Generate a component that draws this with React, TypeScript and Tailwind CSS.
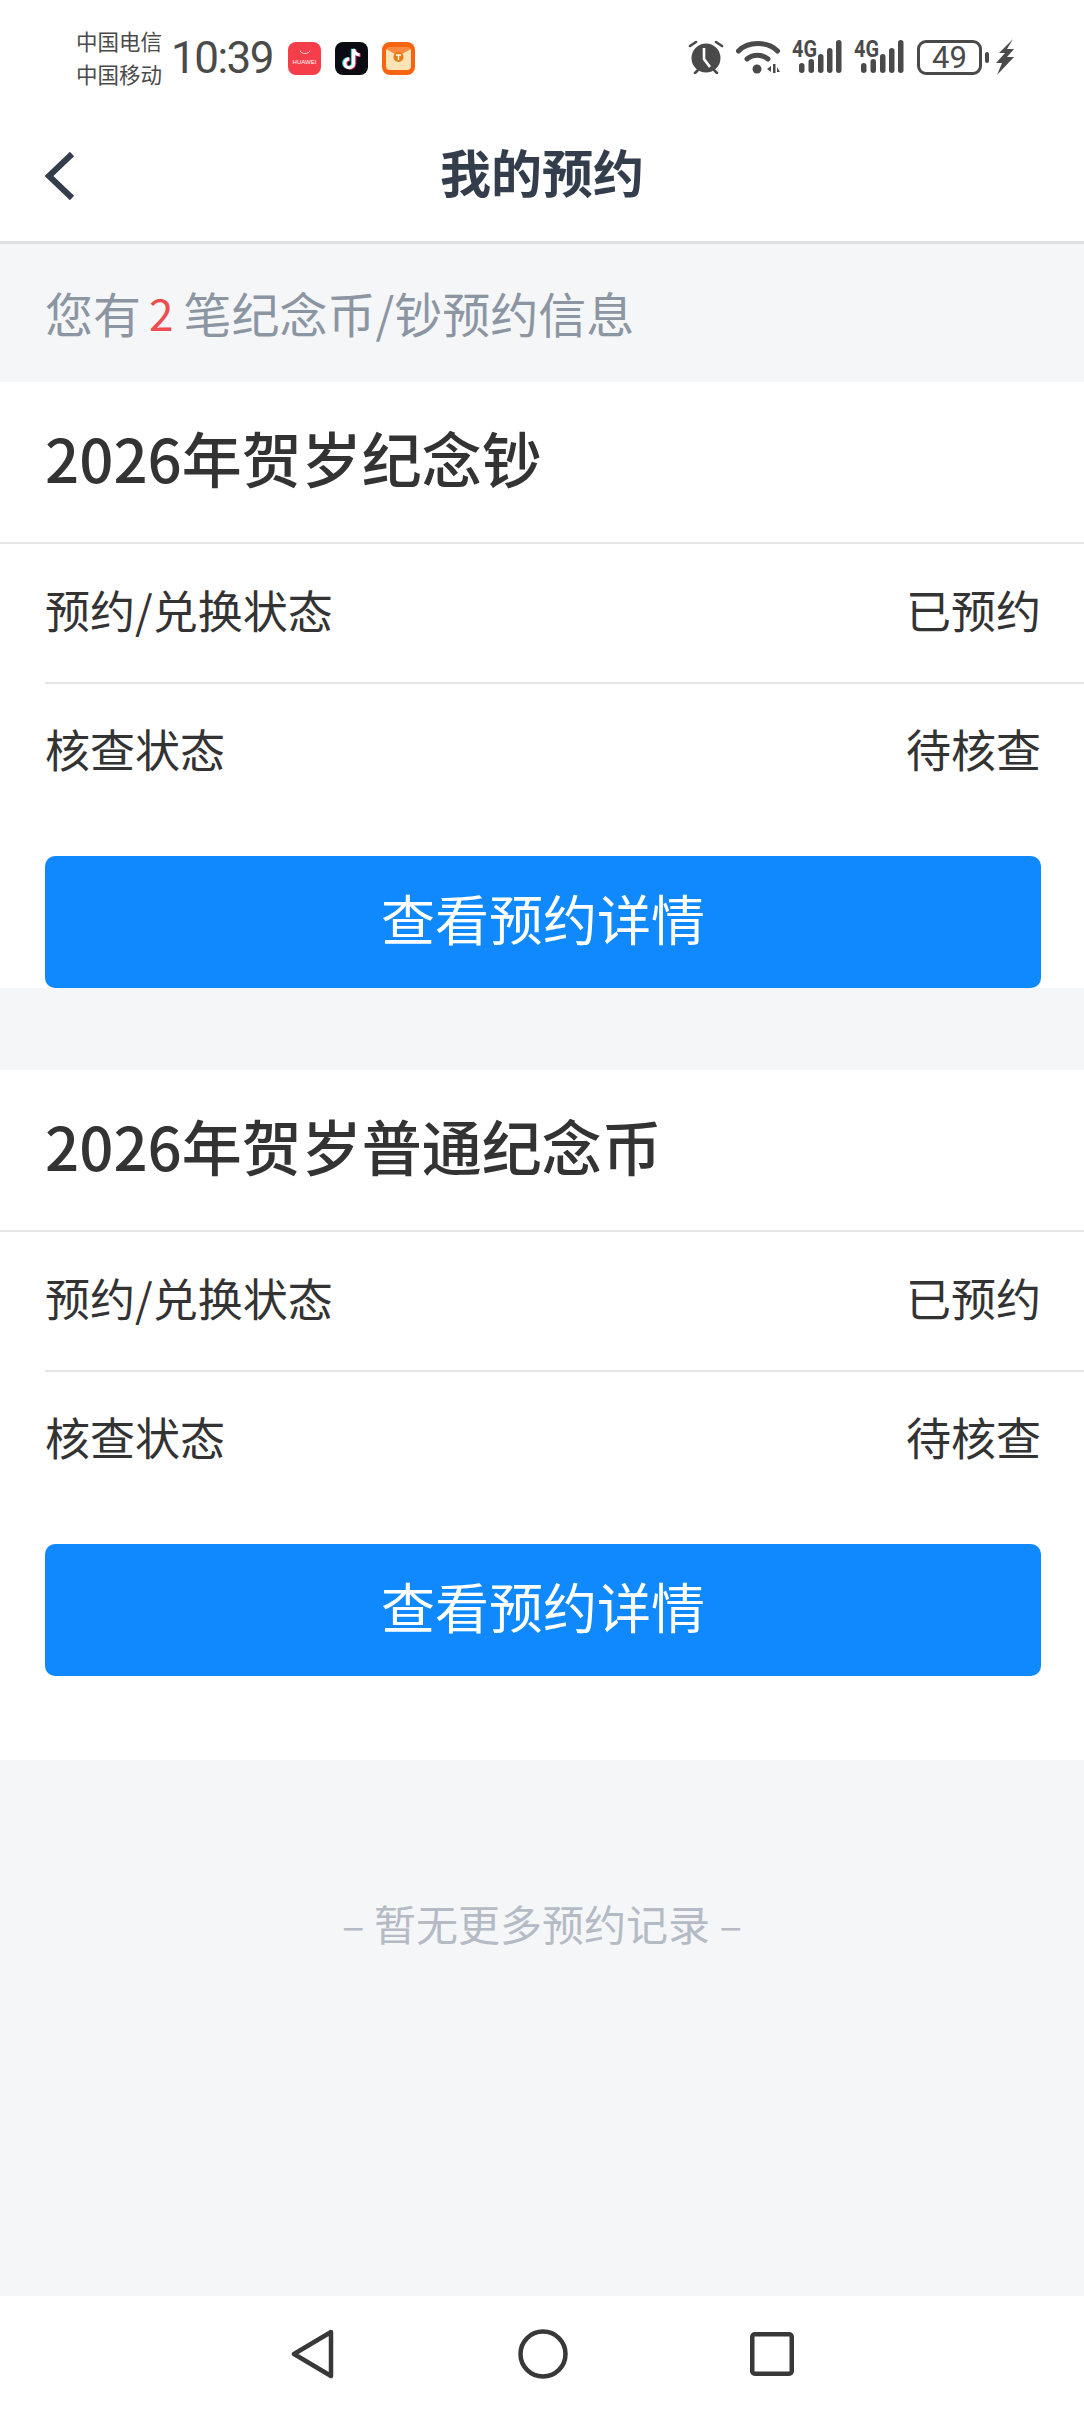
const cjk = "font-['Noto_Sans_CJK_SC','Noto_Sans',sans-serif]"

function Bars() {
  return (
    <svg width="50" height="46" viewBox="0 -6 50 46" className="text-[#4a4a4a]">
      <text x="0" y="17" fontSize="23" fontWeight="700" fill="currentColor" fontFamily="Roboto, sans-serif" textLength="25" lengthAdjust="spacingAndGlyphs">4G</text>
      <rect x="7" y="23" width="5.500" height="10" rx="2.750" fill="currentColor" />
      <rect x="16.500" y="19" width="5.500" height="14" rx="2.750" fill="currentColor" />
      <rect x="26" y="14" width="5.500" height="19" rx="2.750" fill="currentColor" />
      <rect x="35" y="8" width="5.500" height="25" rx="2.750" fill="currentColor" />
      <rect x="44" y="0" width="5.500" height="33" rx="2.750" fill="currentColor" />
    </svg>
  )
}

function StatusBar() {
  return (
    <div className="h-[112px] flex items-start pt-[24px] pl-[76px] pr-[70px] justify-between">
      <div className="flex items-center">
        <div className="flex flex-col text-[21.5px] leading-[33px] text-[#4a4a4a] w-[95px] pb-[2px]">
          <span>中国电信</span>
          <span>中国移动</span>
        </div>
        <span className="text-[44px] leading-[66px] tracking-[-1.5px] text-[#4a4a4a] font-['Roboto',sans-serif] w-[117px]">10:39</span>
        <div className="flex gap-[14px]">
          <div className="w-[33px] h-[33px] rounded-[8px] bg-[#f63d4a] flex flex-col items-center justify-center">
            <svg width="14" height="6" viewBox="0 0 14 6" className="mb-[3px]"><path d="M2 0.500c1 4 9 4 10 0" stroke="#ffd9dc" strokeWidth="1" fill="none" /></svg>
            <span className="text-[6px] leading-[7px] text-white font-['Liberation_Sans',sans-serif]">HUAWEI</span>
          </div>
          <div className="w-[33px] h-[33px] rounded-[8px] bg-[#0b0b14] flex items-center justify-center">
            <svg width="22" height="26" viewBox="0 0 22 26" fill="none">
              <path d="M12.600 3v14.200a4.400 4.400 0 1 1-4.400-4.400M12.600 3c.4 3.400 2.800 5.600 6 5.800" stroke="#25e0dc" strokeWidth="3.400" transform="translate(-1 .8)" />
              <path d="M12.600 3v14.200a4.400 4.400 0 1 1-4.400-4.400M12.600 3c.4 3.400 2.800 5.600 6 5.800" stroke="#ff2c55" strokeWidth="3.400" transform="translate(1 1.400)" />
              <path d="M12.600 3v14.200a4.400 4.400 0 1 1-4.400-4.400M12.600 3c.4 3.400 2.800 5.600 6 5.800" stroke="#ffffff" strokeWidth="3.200" transform="translate(0 1)" />
            </svg>
          </div>
          <div className="w-[33px] h-[33px] rounded-[8px] bg-[#f8640f] flex items-center justify-center">
            <svg width="25" height="23" viewBox="0 0 25 23">
              <rect width="25" height="23" rx="4" fill="#fde3b5" />
              <path d="M0 2l12.500 7L25 2V0H0z" fill="#f8640f" opacity=".7" />
              <circle cx="12.500" cy="10" r="5" fill="#ef7a12" />
              <path d="M10 8h5M12.500 8v5" stroke="#fff" strokeWidth="1.400" />
            </svg>
          </div>
        </div>
      </div>
      <div className="flex items-center h-[50px] mt-[8px] text-[#4a4a4a]">
        <svg width="36" height="34" viewBox="0 0 36 34" className="mr-[12px]">
          <circle cx="18" cy="18" r="14.500" fill="currentColor" />
          <path d="M16 8v11l6 8" stroke="#fff" strokeWidth="2.600" fill="none" />
          <path d="M2 6l6-4M34 6l-6-4M7 33l3-3M29 33l-3-3" stroke="currentColor" strokeWidth="2.600" strokeLinecap="round" />
        </svg>
        <svg width="44" height="34" viewBox="0 0 44 34" fill="none" className="mr-[12px]">
          <path d="M2.500 11C12 1 32 1 41.500 11M11 19c6-5 15-5 21 0" stroke="currentColor" strokeWidth="5" strokeLinecap="round" />
          <circle cx="21" cy="29" r="4.500" fill="currentColor" />
          <path d="M31 29l4-3v6zM37 24h2.500v9H37zM41 27l3 5h-3z" fill="currentColor" />
        </svg>
        <Bars />
        <div className="w-[12px]" />
        <Bars />
        <div className="w-[13px]" />
        <div className="w-[65px] h-[35px] rounded-[9px] border-[3px] border-[#4a4a4a] flex items-center justify-center text-[31px] leading-none font-['Roboto',sans-serif]">49</div>
        <div className="w-[4px] h-[11px] rounded-[2px] bg-[#4a4a4a] ml-[3px]" />
        <svg width="18" height="36" viewBox="0 0 18 36" className="ml-[7px]">
          <path d="M17 0L3 14h6L0 24h6L1 36l17-18h-7l7-8h-7z" fill="currentColor" />
        </svg>
      </div>
    </div>
  )
}

function Row({ label, value, last }: { label: string, value: string, last?: boolean }) {
  return (
    <div className={`ml-[45px] pr-[43px] pb-[6px] flex items-center justify-between text-[45px] text-[#333333] ${last ? 'h-[136px]' : 'h-[140px] border-b-2 border-[#e3e3e3]'}`}>
      <span>{label}</span>
      <span>{value}</span>
    </div>
  )
}

function Card({ title }: { title: string }) {
  return (
    <div className="bg-white">
      <div className="h-[162px] px-[45px] pb-[10px] flex items-center border-b-2 border-[#e6e6e6] text-[60px] font-medium text-[#333333]">
        {title}
      </div>
      <Row label="预约/兑换状态" value="已预约" />
      <Row label="核查状态" value="待核查" last />
      <button className="block mt-[36px] mx-[45px] w-[996px] h-[132px] pb-[10px] rounded-[10px] bg-[#1089ff] text-white text-[54px]">
        查看预约详情
      </button>
    </div>
  )
}

export default function App() {
  return (
    <div className={`w-[1084px] h-[2412px] flex flex-col bg-[#f5f6f8] overflow-hidden ${cjk}`}>
      <div className="bg-white">
        <StatusBar />
        <div className="relative h-[132px] flex items-center justify-center border-b-[3px] border-[#dfe1e4] pb-[10px]">
          <svg width="32" height="50" viewBox="0 0 32 50" fill="none" className="absolute left-[44px] top-[39px]">
            <path d="M28 3L5 25l23 22" stroke="#333d4b" strokeWidth="6" />
          </svg>
          <span className="text-[51px] font-bold text-[#333d4b]">我的预约</span>
        </div>
      </div>
      <div className="h-[138px] pl-[45px] pb-[2px] flex items-center text-[48px] text-[#8c96a3]">
        您有<span className="text-[44px] text-[#ee4d4f] ml-[8px] mr-[10px]">2</span>笔纪念币/钞预约信息
      </div>
      <Card title="2026年贺岁纪念钞" />
      <div className="h-[82px] shrink-0" />
      <div className="pb-[84px] bg-white">
        <Card title="2026年贺岁普通纪念币" />
      </div>
      <div className="flex-1 pt-[131px] text-center text-[42px] text-[#b5bbc5]">
        – 暂无更多预约记录 –
      </div>
      <div className="h-[116px] bg-white flex items-center justify-center">
        <svg width="44" height="50" viewBox="0 0 44 50" fill="none" className="mr-[183px]">
          <path d="M40 3L3 25l37 22z" stroke="#383838" strokeWidth="4.500" strokeLinejoin="round" />
        </svg>
        <svg width="50" height="50" viewBox="0 0 50 50" fill="none" className="mr-[182px]">
          <circle cx="25" cy="25" r="22.500" stroke="#383838" strokeWidth="4.500" />
        </svg>
        <svg width="44" height="44" viewBox="0 0 44 44" fill="none">
          <rect x="2.250" y="2.250" width="39.500" height="39.500" rx="2.500" stroke="#383838" strokeWidth="4.500" />
        </svg>
      </div>
    </div>
  )
}
